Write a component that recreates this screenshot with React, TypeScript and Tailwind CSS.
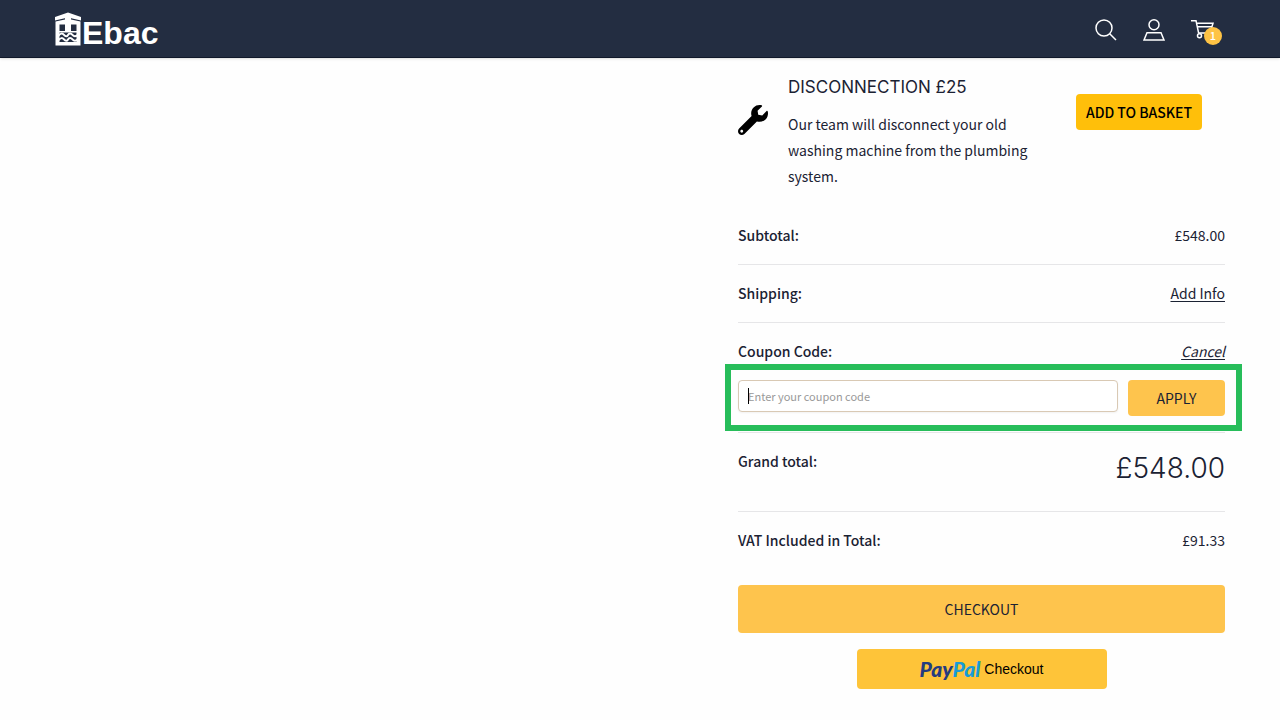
import type { ReactNode } from "react";

const SummaryRow = ({ label, children }: { label: string; children: ReactNode }) => (
  <div className="flex justify-between border-b border-[#e6e6e8] py-4 leading-[25px]">
    <dt className="font-medium">{label}</dt>
    <dd>{children}</dd>
  </div>
);

const Logo = () => (
  <a href="#home" aria-label="Ebac home" className="flex items-center">
    <svg viewBox="0 0 28 34" className="h-[34px] w-7" aria-hidden="true">
      <path d="M1 5 14 0.500l13 4.500v3.500L14 5.500 1 8.500Z" fill="#fff" />
      <path d="M1.500 9.500 11 7.500V5h6v2.500l9.500 2V33.500h-25Z" fill="#fff" />
      <path d="M5.500 12.500h5.500v6.500H5.500ZM17 12.500h5.500v6.500H17ZM5.500 20.500h17v9.500h-17Z" fill="#232d41" />
      <path
        d="M4.500 23.500c2-2.400 4-2.400 5.500-.6s3 1.800 4 0 3-1.800 4.500 0 3 1.800 5 .2M4.500 28c2-2.400 4-2.400 5.500-.6s3 1.800 4 0 3-1.800 4.500 0 3 1.800 5 .2"
        fill="none"
        stroke="#fff"
        strokeWidth="2"
      />
    </svg>
    <span className="pt-2 font-['Liberation_Sans',sans-serif] text-[32px] leading-[34px] font-bold text-white">Ebac</span>
  </a>
);

const Header = () => (
  <header className="flex h-[58px] items-center justify-between border-b border-[#10182a] bg-[#232d41] pr-[57px] pl-[54px] shadow-sm">
    <Logo />
    <nav aria-label="Account" className="flex items-center gap-[26px] pt-[2px] text-white">
      <button type="button" aria-label="Search">
        <svg viewBox="0 0 22 22" className="size-[22px]" fill="none" stroke="currentColor" strokeWidth="1.5">
          <circle cx="9" cy="9" r="8" />
          <path d="m14.700 14.700 6.300 6.300" />
        </svg>
      </button>
      <a href="#account" aria-label="My account">
        <svg viewBox="0 0 22 22" className="size-[22px]" fill="none" stroke="currentColor" strokeWidth="1.5">
          <circle cx="11" cy="5.800" r="5" />
          <path d="M4 13.700h14l3 7.300H1Z" />
        </svg>
      </a>
      <a href="#basket" aria-label="Basket, 1 item" className="relative block w-8">
        <svg viewBox="0 0 24 22" className="h-[22px] w-6" fill="none" stroke="currentColor" strokeWidth="1.500">
          <path d="M0 1.700h5l2.600 12.300h11.400L22 4.200H5.600M6.400 7.800H21" />
          <circle cx="8.500" cy="16.700" r="2" />
          <circle cx="18" cy="16.700" r="2" />
        </svg>
        <span className="absolute top-2 left-[13px] flex size-[18px] items-center justify-center rounded-full bg-[#fec345] text-[11px] font-medium">1</span>
      </a>
    </nav>
  </header>
);

export default function App() {
  return (
    <div className="min-h-screen bg-[#fefefe] font-['Noto_Sans_CJK_SC',sans-serif] text-[14px] text-[#1b2233]">
      <Header />
      <main className="flex justify-end pt-4 pr-[55px] pl-4">
        <div className="w-full max-w-[487px]">
          <section className="flex items-start pb-[18px]">
            <svg viewBox="0 0 512 512" className="mt-[31px] mr-5 size-[30px] shrink-0" fill="#000" aria-hidden="true">
              <path d="M507.730 109.100c-2.240-9.030-13.540-12.090-20.120-5.510l-74.360 74.360-67.880-11.310-11.310-67.880 74.360-74.360c6.620-6.620 3.430-17.900-5.660-20.160-47.380-11.740-99.550.91-136.580 37.930-39.640 39.640-50.550 97.100-34.050 147.200L18.740 402.760c-24.990 24.990-24.990 65.510 0 90.500 24.990 24.990 65.510 24.990 90.500 0l213.210-213.210c50.120 16.710 107.470 5.680 147.370-34.220 37.070-37.070 49.700-89.320 37.910-136.730zM64 472c-13.250 0-24-10.750-24-24 0-13.260 10.750-24 24-24s24 10.740 24 24c0 13.250-10.750 24-24 24z" />
            </svg>
            <div className="w-[252px]">
              <h2 className="mb-[11px] font-[Inter,sans-serif] text-[17px] leading-[26px] whitespace-nowrap">DISCONNECTION £25</h2>
              <p className="leading-[26px]">Our team will disconnect your old washing machine from the plumbing system.</p>
            </div>
            <button type="button" className="mt-5 ml-9 h-9 w-[126px] shrink-0 rounded bg-[#ffbf0a] font-medium text-black">ADD TO BASKET</button>
          </section>

          <dl>
            <SummaryRow label="Subtotal:">£548.00</SummaryRow>
            <SummaryRow label="Shipping:">
              <a href="#shipping" className="underline underline-offset-2">Add Info</a>
            </SummaryRow>
            <div className="border-b border-[#e6e6e8] py-4">
              <div className="flex justify-between leading-[25px]">
                <dt className="font-medium">
                  <label htmlFor="coupon">Coupon Code:</label>
                </dt>
                <dd>
                  <a href="#cancel" className="italic underline underline-offset-2">Cancel</a>
                </dd>
              </div>
              <dd className="relative mt-4">
                <form className="flex items-start gap-[10px]">
                  <div className="relative flex-1">
                    <input
                      id="coupon"
                      type="text"
                      placeholder="Enter your coupon code"
                      className="block h-8 w-full rounded border border-[#d9c9b4] bg-white px-[9px] text-[11px] shadow-xs outline-none placeholder:text-[#999]"
                    />
                    <span aria-hidden="true" className="absolute top-2 left-[10px] h-4 w-px bg-black" />
                  </div>
                  <button type="button" className="h-9 w-[97px] rounded bg-[#fec44d]">APPLY</button>
                </form>
                <div aria-hidden="true" className="pointer-events-none absolute -top-4 -right-[17px] -bottom-[15px] -left-[13px] border-[6px] border-[#27bd5a]" />
              </dd>
            </div>
            <div className="flex justify-between border-b border-[#e6e6e8] pt-4 pb-6">
              <dt className="leading-[25px] font-medium">Grand total:</dt>
              <dd className="font-[Inter,sans-serif] text-[28px] leading-[38px] font-light">£548.00</dd>
            </div>
            <div className="flex justify-between py-4 leading-[25px]">
              <dt className="font-medium">VAT Included in Total:</dt>
              <dd>£91.33</dd>
            </div>
          </dl>

          <div className="flex flex-col items-center gap-4 pt-4 pb-8">
            <button type="button" className="h-12 w-full rounded bg-[#fec44d]">CHECKOUT</button>
            <button type="button" className="flex h-10 w-[250px] items-center justify-center gap-1 rounded bg-[#fec439] text-black">
              <span className="font-[Lato,sans-serif] text-[21px] leading-6 font-black text-[#253b80] italic">
                Pay<span className="text-[#179bd7]">Pal</span>
              </span>
              <span className="font-['Liberation_Sans',sans-serif]">Checkout</span>
            </button>
          </div>
        </div>
      </main>
    </div>
  );
}
